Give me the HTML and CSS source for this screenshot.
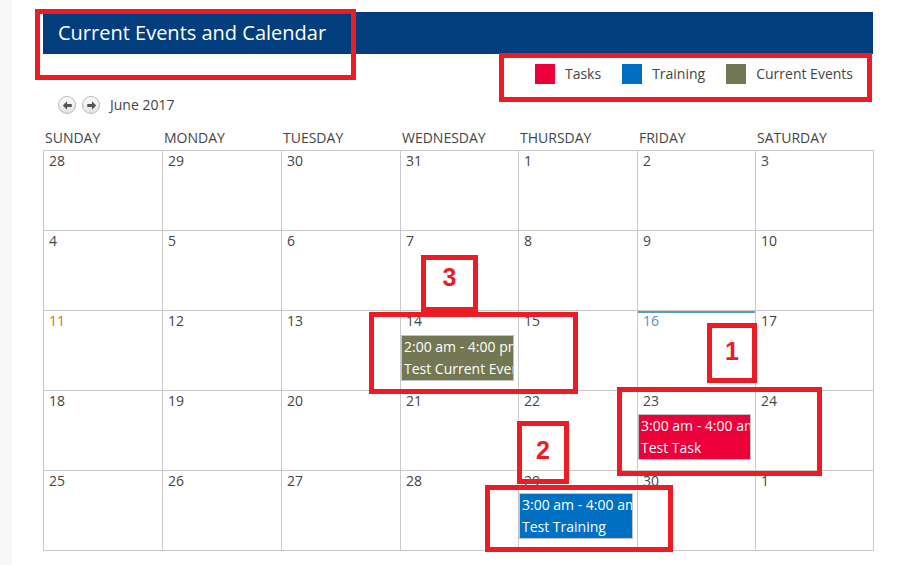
FILE: index.html
```html
<!DOCTYPE html>
<html lang="en">
<head>
<meta charset="utf-8">
<title>Current Events and Calendar</title>
<link rel="stylesheet" href="styles.css">
</head>
<body>
<div class="page">
  <aside class="rail"></aside>
  <main class="main">
    <div class="banner"><h1 class="banner-title">Current Events and Calendar</h1></div>
    <ul class="legend">
      <li class="legend-item"><span class="swatch swatch-task"></span>Tasks</li>
      <li class="legend-item"><span class="swatch swatch-training"></span>Training</li>
      <li class="legend-item"><span class="swatch swatch-event"></span>Current Events</li>
    </ul>
    <div class="nav">
      <button class="nav-btn" type="button" aria-label="Previous month">
        <svg viewBox="0 0 16 16" width="15" height="15"><path d="M3 8 L7.5 3.5 L7.5 6.3 L12.5 6.3 L12.5 9.7 L7.5 9.7 L7.5 12.5 Z" fill="#555"/></svg>
      </button>
      <button class="nav-btn" type="button" aria-label="Next month">
        <svg viewBox="0 0 16 16" width="15" height="15"><path d="M13 8 L8.5 3.5 L8.5 6.3 L3.5 6.3 L3.5 9.7 L8.5 9.7 L8.5 12.5 Z" fill="#555"/></svg>
      </button>
      <span class="nav-month">June 2017</span>
    </div>
    <div class="weekdays">
      <div class="weekday">Sunday</div>
      <div class="weekday">Monday</div>
      <div class="weekday">Tuesday</div>
      <div class="weekday">Wednesday</div>
      <div class="weekday">Thursday</div>
      <div class="weekday">Friday</div>
      <div class="weekday">Saturday</div>
    </div>
    <div class="month">
      <div class="day"><span class="day-num">28</span></div>
      <div class="day"><span class="day-num">29</span></div>
      <div class="day"><span class="day-num">30</span></div>
      <div class="day"><span class="day-num">31</span></div>
      <div class="day"><span class="day-num">1</span></div>
      <div class="day"><span class="day-num">2</span></div>
      <div class="day"><span class="day-num">3</span></div>

      <div class="day"><span class="day-num">4</span></div>
      <div class="day"><span class="day-num">5</span></div>
      <div class="day"><span class="day-num">6</span></div>
      <div class="day"><span class="day-num">7</span></div>
      <div class="day"><span class="day-num">8</span></div>
      <div class="day"><span class="day-num">9</span></div>
      <div class="day"><span class="day-num">10</span></div>

      <div class="day"><span class="day-num day-num-hover">11</span></div>
      <div class="day"><span class="day-num">12</span></div>
      <div class="day"><span class="day-num">13</span></div>
      <div class="day"><span class="day-num">14</span>
        <div class="event event-current"><div class="event-line">2:00 am - 4:00 pm</div><div class="event-line">Test Current Event</div></div>
      </div>
      <div class="day"><span class="day-num">15</span></div>
      <div class="day day-today"><span class="day-num day-num-today">16</span></div>
      <div class="day"><span class="day-num">17</span></div>

      <div class="day"><span class="day-num">18</span></div>
      <div class="day"><span class="day-num">19</span></div>
      <div class="day"><span class="day-num">20</span></div>
      <div class="day"><span class="day-num">21</span></div>
      <div class="day"><span class="day-num">22</span></div>
      <div class="day"><span class="day-num">23</span>
        <div class="event event-task"><div class="event-line">3:00 am - 4:00 am</div><div class="event-line">Test Task</div></div>
      </div>
      <div class="day"><span class="day-num">24</span></div>

      <div class="day"><span class="day-num">25</span></div>
      <div class="day"><span class="day-num">26</span></div>
      <div class="day"><span class="day-num">27</span></div>
      <div class="day"><span class="day-num">28</span></div>
      <div class="day"><span class="day-num">29</span>
        <div class="event event-training"><div class="event-line">3:00 am - 4:00 am</div><div class="event-line">Test Training</div></div>
      </div>
      <div class="day"><span class="day-num">30</span></div>
      <div class="day"><span class="day-num">1</span></div>
    </div>
  </main>

  <div class="mark mark-title"></div>
  <div class="mark mark-legend"></div>
  <div class="mark mark-digit mark-d3">3</div>
  <div class="mark mark-current"></div>
  <div class="mark mark-digit mark-d1">1</div>
  <div class="mark mark-task"></div>
  <div class="mark mark-digit mark-d2">2</div>
  <div class="mark mark-training"></div>
</div>
</body>
</html>
```

FILE: styles.css
```css
html, body {
  margin: 0;
  padding: 0;
  background: #ffffff;
}

body {
  font-family: "Open Sans", "DejaVu Sans", sans-serif;
  font-size: 14px;
  color: #444444;
}

.page {
  position: relative;
  display: flex;
  min-height: 565px;
}

.rail {
  width: 12px;
  flex: 0 0 12px;
  background: #f8f8f8;
}

.main {
  width: 831px;
  margin-left: 31px;
  padding-top: 12px;
}

.banner {
  width: 830px;
  height: 42px;
  background: #023e7d;
  padding-left: 15px;
  box-sizing: border-box;
}

.banner-title {
  margin: 0;
  font-size: 20px;
  font-weight: 400;
  line-height: 42px;
  color: #ffffff;
}

.legend {
  list-style: none;
  margin: 10px 0 0 0;
  padding: 0 21px 0 0;
  height: 20px;
  display: flex;
  justify-content: flex-end;
  gap: 21px;
}

.legend-item {
  display: flex;
  align-items: center;
  line-height: 20px;
  color: #444444;
}

.swatch {
  width: 20px;
  height: 20px;
  margin-right: 10px;
}

.swatch-task { background: #eb0039; }
.swatch-training { background: #0070c5; }
.swatch-event { background: #737853; }

.nav {
  margin-top: 12px;
  height: 18px;
  padding-left: 15px;
  display: flex;
  align-items: center;
}

.nav-btn {
  width: 18px;
  height: 18px;
  padding: 0;
  margin: 0 6px 0 0;
  border: 1px solid #b9b9b9;
  border-radius: 50%;
  background: linear-gradient(#fdfdfd, #e4e4e4);
  display: flex;
  align-items: center;
  justify-content: center;
  box-sizing: border-box;
}

.nav-btn svg {
  display: block;
}

.nav-month {
  margin-left: 4px;
  line-height: 18px;
  color: #444444;
}

.weekdays,
.month {
  display: grid;
  grid-template-columns: 119px 119px 119px 118px 119px 118px 118px;
}

.weekdays {
  margin-top: 14px;
  height: 22px;
  padding-left: 1px;
}

.weekday {
  padding-left: 1px;
  line-height: 20px;
  text-transform: uppercase;
  color: #444444;
}

.month {
  grid-auto-rows: 80px;
  border-left: 1px solid #c9c9c9;
  border-top: 1px solid #c9c9c9;
}

.day {
  box-sizing: border-box;
  border-right: 1px solid #c9c9c9;
  border-bottom: 1px solid #c9c9c9;
  overflow: hidden;
  min-width: 0;
}

.day-today {
  box-shadow: inset 0 2px 0 #5b98cf;
}

.day-num {
  display: block;
  padding-left: 5px;
  line-height: 20px;
  color: #444444;
}

.day-num-hover { color: #c9742a; }
.day-num-today { color: #4a8fd4; }

.event {
  margin: 3px 4px 0 0;
  border: 1px solid #c2c2c2;
  color: #ffffff;
  overflow: hidden;
}

.event-line {
  padding-left: 2px;
  line-height: 22px;
  white-space: nowrap;
  overflow: hidden;
}

.event-current { background: #737753; margin-top: 4px; }
.event-task { background: #eb003a; }
.event-training { background: #0070c4; margin-top: 2px; }

/* annotation overlays */
.mark {
  position: absolute;
  box-sizing: border-box;
  border: 5px solid #ed1c24;
}

.mark-digit {
  display: flex;
  justify-content: center;
  align-items: flex-start;
  font-family: "Liberation Sans", Arial, sans-serif;
  font-weight: 700;
  font-size: 25px;
  line-height: 25px;
  color: #ed1c24;
}

.mark-title { left: 35px; top: 9px; width: 321px; height: 71px; }
.mark-legend { left: 499px; top: 53px; width: 373px; height: 49px; }
.mark-d3 { left: 421px; top: 255px; width: 57px; height: 57px; padding-top: 5px; }
.mark-current { left: 369px; top: 312px; width: 209px; height: 82px; }
.mark-d1 { left: 707px; top: 323px; width: 50px; height: 60px; padding-top: 11px; }
.mark-task { left: 617px; top: 387px; width: 205px; height: 89px; }
.mark-d2 { left: 517px; top: 421px; width: 52px; height: 63px; padding-top: 12px; }
.mark-training { left: 485px; top: 485px; width: 188px; height: 67px; }
```
